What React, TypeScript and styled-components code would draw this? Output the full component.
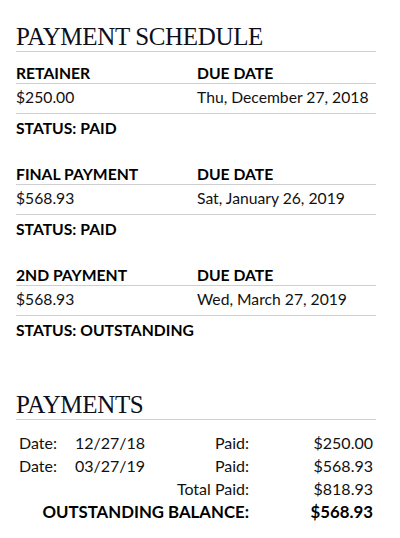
import React from "react";
import styled, { createGlobalStyle } from "styled-components";

const Global = createGlobalStyle`
  html, body { margin: 0; padding: 0; background: #fff; }
  body { font-family: Lato, "Open Sans", sans-serif; color: #111; }
`;

const Page = styled.div`
  width: 400px;
  box-sizing: border-box;
  padding: 22px 24px 0 16px;
`;

const Heading = styled.h2<{ $top?: number }>`
  margin: ${(p) => p.$top ?? 0}px 0 0;
  font-family: "Liberation Serif", "DejaVu Serif", serif;
  font-weight: 400;
  font-size: 25px;
  letter-spacing: -0.35px;
  line-height: 29px;
  color: #0d0f1a;
  border-bottom: 1px solid #cfcfcf;
`;

const Schedule = styled.div`
  display: flex;
  flex-direction: column;
  gap: 26px;
  margin-top: 11px;
`;

const Block = styled.div`
  display: flex;
  flex-direction: column;
`;

const Row = styled.div<{ $kind: "head" | "value" }>`
  display: grid;
  grid-template-columns: 181px 1fr;
  font-size: 15.7px;
  line-height: 20px;
  font-weight: ${(p) => (p.$kind === "head" ? 700 : 400)};
  color: ${(p) => (p.$kind === "head" ? "#000" : "#111")};
  padding: ${(p) => (p.$kind === "head" ? "0" : "3px 0 6px")};
  border-bottom: 1px solid #cfcfcf;
`;

const Status = styled.div`
  padding-top: 4px;
  font-size: 15.7px;
  line-height: 20px;
  font-weight: 700;
  color: #000;
`;

const Payments = styled.div`
  display: grid;
  grid-template-columns: 56px 80px 94px 124px;
  margin-top: 11px;
  padding: 0 3px;
`;

const Cell = styled.div<{ $align?: "left" | "right"; $span?: number; $strong?: boolean }>`
  grid-column: ${(p) => (p.$span ? `span ${p.$span}` : "auto")};
  text-align: ${(p) => p.$align ?? "left"};
  font-size: ${(p) => (p.$strong ? "16.8px" : "16px")};
  font-weight: ${(p) => (p.$strong ? 700 : 400)};
  color: ${(p) => (p.$strong ? "#000" : "#111")};
  line-height: 23px;
  white-space: nowrap;
`;

const blocks = [
  { label: "RETAINER", amount: "$250.00", due: "Thu, December 27, 2018", status: "PAID" },
  { label: "FINAL PAYMENT", amount: "$568.93", due: "Sat, January 26, 2019", status: "PAID" },
  { label: "2ND PAYMENT", amount: "$568.93", due: "Wed, March 27, 2019", status: "OUTSTANDING" },
];

const paid = [
  { date: "12/27/18", amount: "$250.00" },
  { date: "03/27/19", amount: "$568.93" },
];

export default function App() {
  return (
    <>
      <Global />
      <Page>
        <Heading>PAYMENT SCHEDULE</Heading>
        <Schedule>
          {blocks.map((b) => (
            <Block key={b.label}>
              <Row $kind="head">
                <span>{b.label}</span>
                <span>DUE DATE</span>
              </Row>
              <Row $kind="value">
                <span>{b.amount}</span>
                <span>{b.due}</span>
              </Row>
              <Status>STATUS: {b.status}</Status>
            </Block>
          ))}
        </Schedule>
        <Heading $top={50}>PAYMENTS</Heading>
        <Payments>
          {paid.map((p) => (
            <React.Fragment key={p.date}>
              <Cell>Date:</Cell>
              <Cell>{p.date}</Cell>
              <Cell $align="right">Paid:</Cell>
              <Cell $align="right">{p.amount}</Cell>
            </React.Fragment>
          ))}
          <Cell $align="right" $span={3}>Total Paid:</Cell>
          <Cell $align="right">$818.93</Cell>
          <Cell $align="right" $span={3} $strong>OUTSTANDING BALANCE:</Cell>
          <Cell $align="right" $strong>$568.93</Cell>
        </Payments>
      </Page>
    </>
  );
}
